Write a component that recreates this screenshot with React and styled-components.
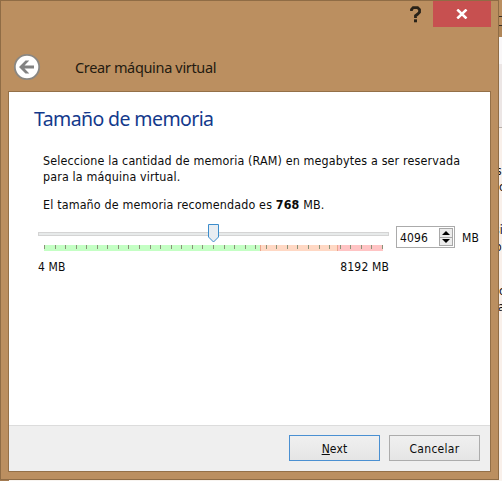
import React from "react";
import styled, { createGlobalStyle } from "styled-components";

const ui = '"DejaVu Sans Condensed", "DejaVu Sans", sans-serif';
const heading = '"Noto Sans", "Open Sans", sans-serif';

const GlobalStyle = createGlobalStyle`
  *, *::before, *::after { box-sizing: border-box; }
  body { margin: 0; overflow: hidden; background: #f6eee8; }
`;

const Desktop = styled.main`
  display: grid;
  grid-template-columns: 499px 3px;
  grid-template-rows: 480px 1px;
  width: 502px;
  height: 481px;
  overflow: hidden;
`;

const Dialog = styled.section`
  display: flex;
  flex-direction: column;
  border: 1px solid #8f6c45;
  background: #bb8f60;
`;

const TitleBar = styled.header`
  display: flex;
  justify-content: flex-end;
  height: 42px;
  padding-right: 7px;
`;

const HelpButton = styled.button`
  display: flex;
  width: 34px;
  height: 26px;
  padding: 5px 0 0 11px;
  border: 0;
  background: none;
`;

const CloseButton = styled.button`
  display: flex;
  align-items: center;
  justify-content: center;
  width: 58px;
  height: 26px;
  padding: 0 1px 0 0;
  border: 0;
  background: #c75050;
`;

const Navigation = styled.div`
  display: flex;
  align-items: center;
  height: 48px;
  padding-left: 12px;
`;

const BackButton = styled.button`
  display: flex;
  width: 28px;
  height: 28px;
  padding: 0;
  border: 0;
  background: none;
`;

const Label = styled.span`
  display: block;
  white-space: pre;
  font-family: ${ui};
  font-size: ${(p) => p.$size || 12}px;
  line-height: ${(p) => p.$line || 16}px;
  letter-spacing: ${(p) => p.$spacing ?? 0.15}px;
  color: #0c0c0c;
`;

const WizardName = styled.span`
  margin-left: 34px;
  white-space: pre;
  font: 14.5px/20px ${heading};
  letter-spacing: -0.34px;
  color: #241b11;
`;

const PageTitle = styled.h1`
  margin: 0;
  white-space: pre;
  font: 400 19.5px/26px ${heading};
  letter-spacing: -0.6px;
  color: #13398c;
`;

const Client = styled.div`
  display: flex;
  flex-direction: column;
  width: 483px;
  height: 381px;
  margin-left: 7px;
  border: 1px solid #947048;
  background: #fff;
`;

const Page = styled.div`
  height: 333px;
  padding: 14px 0 0 25px;
`;

const Paragraph = styled.p`
  margin: ${(p) => p.$top}px 0 0 9px;
`;

const MemoryRow = styled.div`
  display: flex;
  align-items: flex-start;
  height: 34px;
  margin: 10px 0 0 4px;
`;

const SpinBox = styled.div`
  display: flex;
  justify-content: space-between;
  width: 59px;
  height: 22px;
  margin: 3px 7px 0;
  padding: 1px 1px 1px 3px;
  border: 1px solid #ababab;
`;

const Steppers = styled.div`
  display: flex;
  flex-direction: column;
  width: 14px;
  height: 18px;
  border: 1px solid #a8a8a8;
`;

const Stepper = styled.button`
  display: flex;
  align-items: center;
  justify-content: center;
  flex: 1;
  padding: 0;
  border: 0;
  background: #ececec;
  & + & { border-top: 1px solid #a8a8a8; }
`;

const Limits = styled.div`
  display: flex;
  justify-content: space-between;
  width: 351px;
  margin: 2px 0 0 4px;
`;

const Footer = styled.footer`
  display: flex;
  justify-content: flex-end;
  gap: 9px;
  flex: 1;
  padding: 9px 10px 0 0;
  border-top: 1px solid #dcdcdc;
  background: #efefef;
`;

const Button = styled.button`
  display: flex;
  justify-content: center;
  width: 91px;
  height: 26px;
  padding: 5px 0 0;
  border: 1px solid ${(p) => (p.$primary ? "#4a90d2" : "#acacac")};
  background: linear-gradient(#f0f0f0, #e5e5e5);
`;

const BackdropRight = styled.aside`
  display: flex;
  flex-direction: column;
  overflow: hidden;
`;

const Band = styled.div`
  flex: none;
  height: ${(p) => p.$height}px;
  background: ${(p) => p.$fill};
`;

const Sliver = styled(Band)`
  display: flex;
  overflow: hidden;
`;

const SliverText = styled(Label)`
  flex: none;
  margin-left: -${(p) => p.$hidden}px;
`;

const BackdropBottom = styled.div`
  grid-column: 1 / 3;
  height: 1px;
  background: linear-gradient(90deg, #a47c52 9px, #f8f4f0 9px);
`;

const fragments = [
  { text: "s", hidden: 3, gap: 0 },
  { text: "c", hidden: 0, gap: 0 },
  { text: "si", hidden: 5, gap: 27 },
  { text: "o", hidden: 4, gap: 1 },
  { text: "c", hidden: 0, gap: 28 },
  { text: "a", hidden: 1, gap: 0 },
];

function MemorySlider() {
  const ticks = Array.from({ length: 33 }, (_, i) => 6.5 + Math.round(i * 10.56));
  return (
    <svg width="351" height="30" viewBox="0 0 351 30" shapeRendering="crispEdges">
      <rect x="0.5" y="9.5" width="350" height="3" fill="#e7eaea" stroke="#d4d4d4" />
      <rect x="6" y="22" width="217" height="6" fill="#c4ffc4" />
      <rect x="223" y="22" width="77" height="6" fill="#ffd8c4" />
      <rect x="300" y="22" width="45" height="6" fill="#ffc4c4" />
      {ticks.map((x) => (
        <path key={x} d={`M${x} 22v4`} stroke="#8a9278" />
      ))}
      <path d="M222.5 22v6M299.5 22v6" stroke="#eaa58c" />
      <path d="M170.5 1.5h10v12.5l-5 5l-5-5z" fill="#e8edf2" stroke="#3c8dcc" shapeRendering="auto" />
    </svg>
  );
}

export default function App() {
  return (
    <>
      <GlobalStyle />
      <Desktop>
        <Dialog>
          <TitleBar>
            <HelpButton aria-label="Ayuda">
              <svg width="12" height="18" viewBox="0 0 12 18">
                <path d="M1.5 5V3.5L3.2 1.6H7.6L9.5 3.5V6.2L7.6 8.2L5.5 9.8V12" fill="none" stroke="#292319" strokeWidth="2.8" />
                <path d="M4 13.3h3v3H4z" fill="#292319" />
              </svg>
            </HelpButton>
            <CloseButton aria-label="Cerrar">
              <svg width="12" height="10" viewBox="0 0 12 10">
                <path d="M1.3 0.5l9.2 9M10.5 0.5L1.3 9.5" stroke="#fff" strokeWidth="2.5" />
              </svg>
            </CloseButton>
          </TitleBar>
          <Navigation>
            <BackButton aria-label="Atrás">
              <svg width="28" height="28" viewBox="0 0 28 28">
                <circle cx="14" cy="14" r="12.2" fill="#fff" stroke="#8a8782" strokeWidth="1.8" />
                <path d="M6 14l6.5-6.5h3.8L11.5 12.4H21v3.2h-9.5L16.3 20.5h-3.8z" fill="#828282" />
              </svg>
            </BackButton>
            <WizardName>Crear máquina virtual</WizardName>
          </Navigation>
          <Client>
            <Page>
              <PageTitle>Tamaño de memoria</PageTitle>
              <Paragraph $top={21}>
                <Label $size={12.4} $spacing={0.15}>{"Seleccione la cantidad de memoria (RAM) en megabytes a ser reservada\npara la máquina virtual."}</Label>
              </Paragraph>
              <Paragraph $top={12}>
                <Label $size={12.4} $spacing={0.15}>El tamaño de memoria recomendado es <b>768</b> MB.</Label>
              </Paragraph>
              <MemoryRow>
                <MemorySlider />
                <SpinBox>
                  <Label $line={20}>4096</Label>
                  <Steppers>
                    <Stepper aria-label="Aumentar"><svg width="8" height="4"><path d="M0 4l4-4l4 4z" /></svg></Stepper>
                    <Stepper aria-label="Reducir"><svg width="8" height="4"><path d="M0 0l4 4l4-4z" /></svg></Stepper>
                  </Steppers>
                </SpinBox>
                <Label $line={30}>MB</Label>
              </MemoryRow>
              <Limits>
                <Label>4 MB</Label>
                <Label>8192 MB</Label>
              </Limits>
            </Page>
            <Footer>
              <Button $primary><Label><u>N</u>ext</Label></Button>
              <Button><Label $spacing={0.3}>Cancelar</Label></Button>
            </Footer>
          </Client>
        </Dialog>
        <BackdropRight aria-hidden="true">
          <Band $height={16} $fill="#bb8f60" />
          <Band $height={1} $fill="#3a2d1f" />
          <Band $height={8} $fill="#bb8f60" />
          <Band $height={1} $fill="#3a2d1f" />
          <Band $height={11} $fill="#b08658" />
          <Band $height={27} $fill="#f9f7f8" />
          <Band $height={63} $fill="#ece6e5" />
          <Band $height={1} $fill="#b8b0aa" />
          <Band $height={35} $fill="#f9f0ea" />
          {fragments.map((f, i) => (
            <React.Fragment key={i}>
              <Band $height={f.gap} $fill="#f9f0ea" />
              <Sliver $height={16} $fill="#f9f0ea">
                <SliverText $hidden={f.hidden}>{f.text}</SliverText>
              </Sliver>
            </React.Fragment>
          ))}
          <Band $height={165} $fill="#f9f0ea" />
        </BackdropRight>
        <BackdropBottom />
      </Desktop>
    </>
  );
}
